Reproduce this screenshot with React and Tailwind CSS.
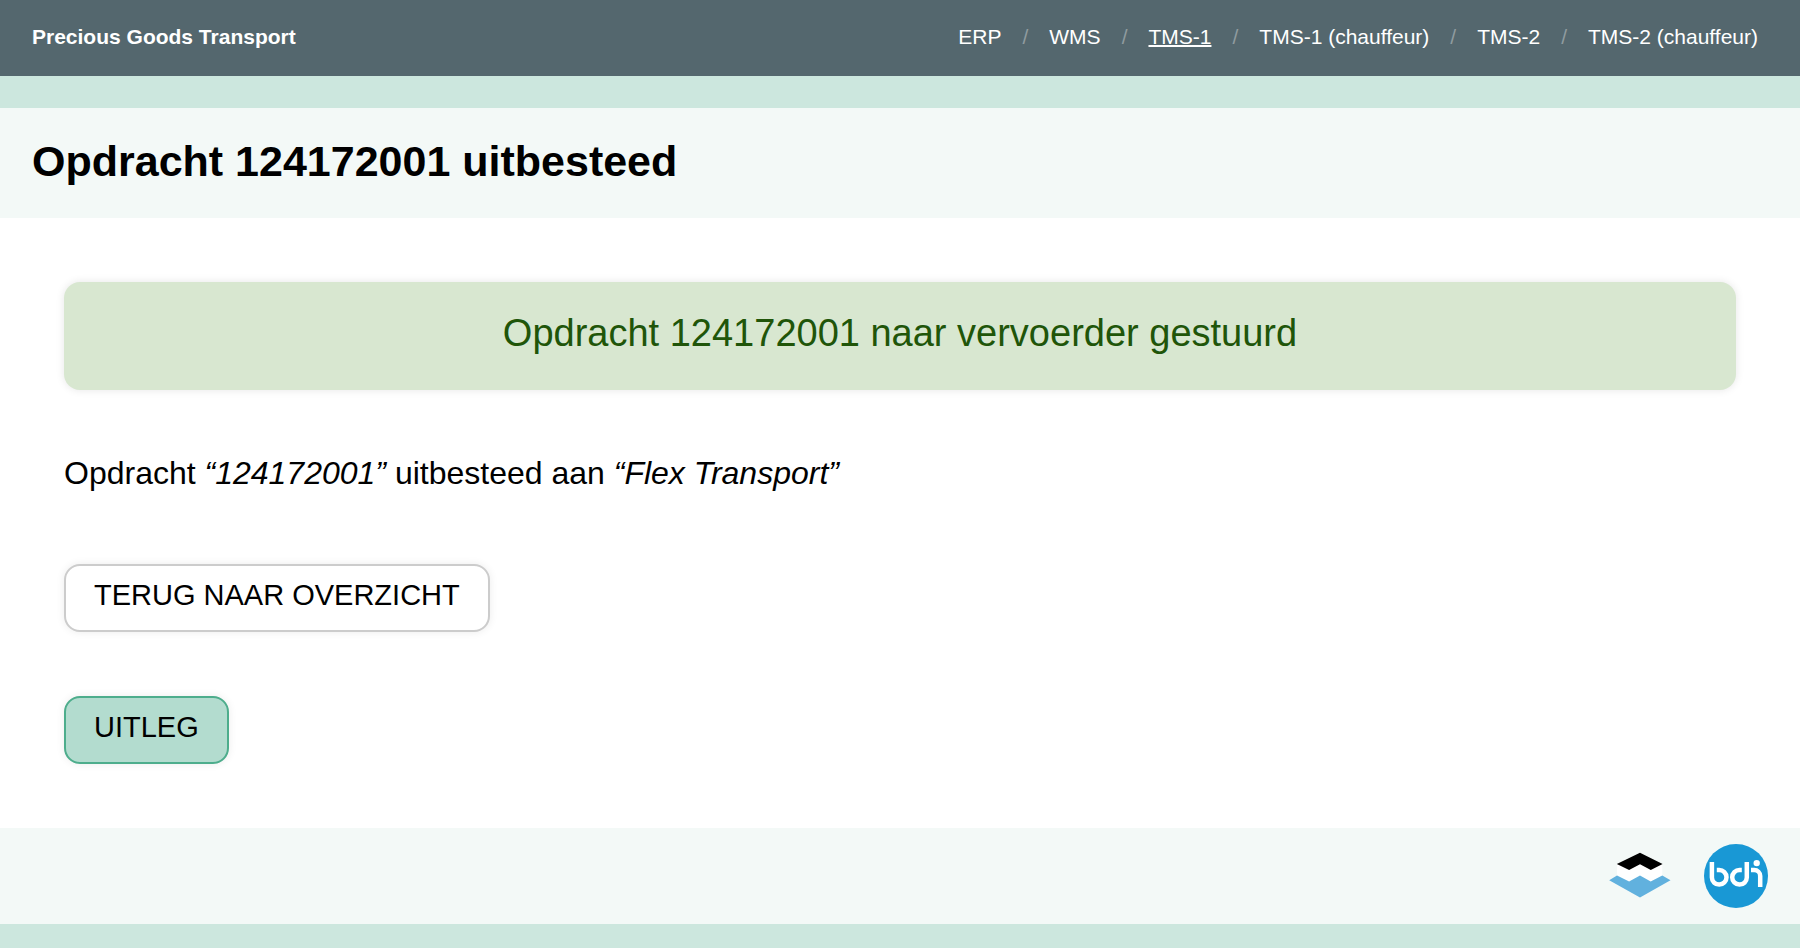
const NAV = [
  { label: 'ERP' },
  { label: 'WMS' },
  { label: 'TMS-1', current: true },
  { label: 'TMS-1 (chauffeur)' },
  { label: 'TMS-2' },
  { label: 'TMS-2 (chauffeur)' },
];

const BUTTON =
  'cursor-pointer rounded-2xl border-2 px-7 pt-[13px] pb-[19px] text-[29px] leading-8 uppercase shadow-[0_0_8px_rgba(0,0,0,0.08)]';

function StackLogo() {
  return (
    <svg className="size-16" viewBox="0 0 64 64" role="img" aria-label="Logo">
      <path fill="#fff" d="M9 20 32 18l22.3 2v11.6L42.7 38 32 32.2 21.1 38 9 31.6z" />
      <path fill="#000" d="M32 8.8 54.6 20l-11.8 6L32 20.3 21.1 26 8.8 20z" />
      <path fill="#61b1de" d="M1.2 36.2 9 31.6l12.1 5.8L32 31.6l10.7 5.8 11.6-5.8 8.2 4.6L32 53.4z" />
    </svg>
  );
}

function BdiLogo() {
  return (
    <svg className="size-16" viewBox="0 0 64 64" role="img" aria-label="BDI">
      <circle cx="32" cy="32" r="32" fill="#1998d5" />
      <g fill="none" stroke="#fff" strokeWidth="4.5">
        <path d="M7.9 18V33.4a7.3 7.3 0 1 0 7.3-7.4H12.8" />
        <path d="M42.8 18V33.4a7.3 7.3 0 1 1-7.3-7.4H37.8" />
        <path d="M47 26h3.2a6 6 0 0 1 6 6V43" />
      </g>
      <circle cx="52.7" cy="19.1" r="3.2" fill="#fff" />
    </svg>
  );
}

export default function App() {
  return (
    <div className="min-h-screen bg-[#cce7de] font-['Liberation_Sans',Arial,sans-serif] text-black">
      <header className="mb-8 flex items-center justify-between bg-[#54676e] pt-[25px] pr-[42px] pb-[27px] pl-8 text-[21px] leading-6 text-white">
        <strong className="font-bold">Precious Goods Transport</strong>
        <nav aria-label="Systemen">
          <ul className="flex gap-[21px]">
            {NAV.map((item, i) => (
              <li key={item.label} className="flex gap-[21px]">
                {i > 0 && (
                  <span aria-hidden="true" className="text-[#8f9b9f]">
                    /
                  </span>
                )}
                <a
                  href="#"
                  aria-current={item.current ? 'page' : undefined}
                  className={item.current ? 'underline decoration-2' : ''}
                >
                  {item.label}
                </a>
              </li>
            ))}
          </ul>
        </nav>
      </header>

      <div className="bg-[#f3f9f7] px-8 pt-[30px] pb-[34px]">
        <h1 className="text-[43px] leading-[46px] font-bold">Opdracht 124172001 uitbesteed</h1>
      </div>

      <main className="flex flex-col items-start gap-16 bg-white p-16">
        <p
          role="status"
          className="w-full rounded-2xl bg-[#d8e7d0] px-8 pt-[29px] pb-[35px] text-center text-[38px] leading-[44px] text-[#205509] shadow-[0_0_8px_rgba(0,0,0,0.1)]"
        >
          Opdracht 124172001 naar vervoerder gestuurd
        </p>
        <p className="pb-2 text-[32px] leading-[38px]">
          Opdracht <em>“124172001”</em> uitbesteed aan <em>“Flex Transport”</em>
        </p>
        <button type="button" className={`${BUTTON} border-[#cccccc] bg-white`}>
          Terug naar overzicht
        </button>
        <button type="button" className={`${BUTTON} border-[#4dad8c] bg-[#b3dccf]`}>
          Uitleg
        </button>
      </main>

      <footer className="flex justify-end gap-8 bg-[#f3f9f7] px-8 py-4">
        <StackLogo />
        <BdiLogo />
      </footer>
    </div>
  );
}
